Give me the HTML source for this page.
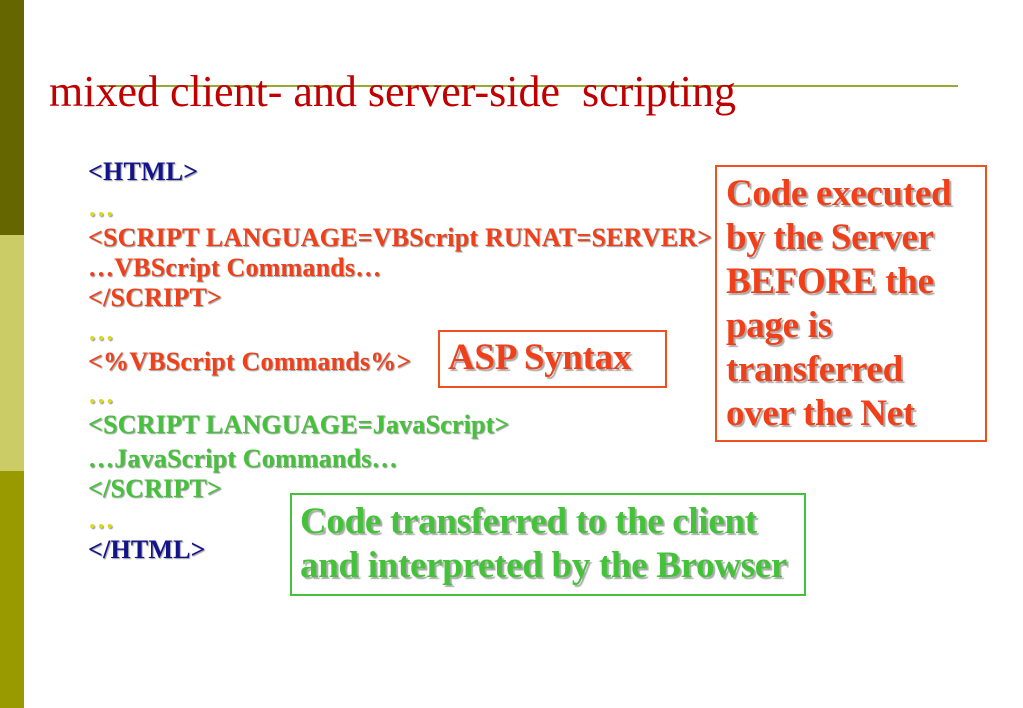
<html><head><style>
body{margin:0;width:1023px;height:708px;background:#fff;position:relative;overflow:hidden;font-family:"Liberation Serif",serif}
.a{position:absolute;white-space:nowrap}
.c{font-weight:bold;font-size:26px;line-height:30px;text-shadow:1px 1px 1px #999;transform:scaleX(1.0);transform-origin:left;letter-spacing:0.2px}
.b{font-weight:bold;font-size:37px;text-shadow:2px 2px 1px #aaa;letter-spacing:-0.3px}
.r{color:#f0401a}.g{color:#44c33a}.n{color:#13138a}.y{color:#d8d820}
</style></head><body>
<div class="a" style="left:0;top:0;width:24px;height:235px;background:#666600"></div>
<div class="a" style="left:0;top:235px;width:24px;height:236px;background:#cccc66"></div>
<div class="a" style="left:0;top:471px;width:24px;height:237px;background:#999900"></div>
<div class="a" style="left:100px;top:85px;width:858px;height:2px;background:#99aa33"></div>
<div class="a" style="left:49px;top:64px;font-size:44px;color:#c00000;line-height:56px">mixed client- and server-side&nbsp; scripting</div>
<div class="a c n" style="left:88px;top:157px">&lt;HTML&gt;</div>
<div class="a c y" style="left:88px;top:193px">…</div>
<div class="a c r" style="left:88px;top:223px">&lt;SCRIPT LANGUAGE=VBScript RUNAT=SERVER&gt;</div>
<div class="a c r" style="left:88px;top:253px">…VBScript Commands…</div>
<div class="a c r" style="left:88px;top:283px">&lt;/SCRIPT&gt;</div>
<div class="a c y" style="left:88px;top:317px">…</div>
<div class="a c r" style="left:88px;top:347px">&lt;%VBScript Commands%&gt;</div>
<div class="a c y" style="left:88px;top:380px">…</div>
<div class="a c g" style="left:88px;top:410px">&lt;SCRIPT LANGUAGE=JavaScript&gt;</div>
<div class="a c g" style="left:88px;top:444px">…JavaScript Commands…</div>
<div class="a c g" style="left:88px;top:474px">&lt;/SCRIPT&gt;</div>
<div class="a c y" style="left:88px;top:505px">…</div>
<div class="a c n" style="left:88px;top:535px">&lt;/HTML&gt;</div>
<div class="a" style="left:715px;top:165px;width:268px;height:273px;border:2px solid #f0501e"></div>
<div class="a b r" style="left:726px;top:172px;line-height:44px">Code executed<br>by the Server<br>BEFORE the<br>page is<br>transferred<br>over the Net</div>
<div class="a" style="left:438px;top:330px;width:225px;height:54px;border:2px solid #f0501e"></div>
<div class="a b r" style="left:448px;top:336px;line-height:44px">ASP Syntax</div>
<div class="a" style="left:290px;top:493px;width:512px;height:99px;border:2px solid #44c33a"></div>
<div class="a b g" style="left:300px;top:500px;line-height:44px">Code transferred to the client<br>and interpreted by the Browser</div>
</body></html>
